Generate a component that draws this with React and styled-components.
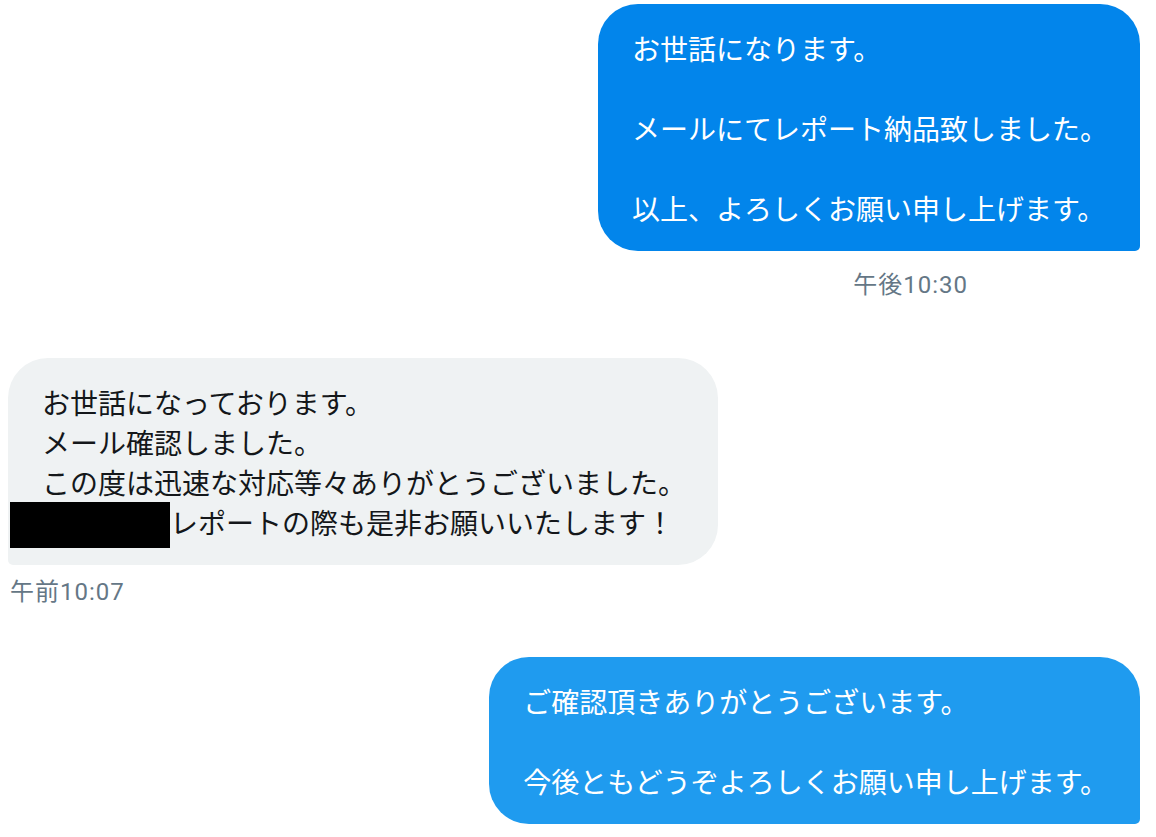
import styled, { createGlobalStyle } from "styled-components";

const GlobalStyle = createGlobalStyle`
    html, body {
        margin: 0;
        padding: 0;
        background: #fff;
    }
    body {
        font-family: "Noto Sans CJK JP", "Noto Sans", sans-serif;
    }
`;

const messages = [
    {
        id: 1,
        sent: true,
        tone: "dark",
        text: "お世話になります。\n\nメールにてレポート納品致しました。\n\n以上、よろしくお願い申し上げます。",
        time: "午後10:30",
    },
    {
        id: 2,
        sent: false,
        time: "午前10:07",
    },
    {
        id: 3,
        sent: true,
        tone: "light",
        text: "ご確認頂きありがとうございます。\n\n今後ともどうぞよろしくお願い申し上げます。",
    },
];

function App() {
    return (
        <>
            <GlobalStyle />
            <Thread>
                {messages.map((m) => (
                    <Group key={m.id} $sent={m.sent}>
                        {m.sent ? (
                            <Bubble $sent $tone={m.tone}>
                                {m.text}
                            </Bubble>
                        ) : (
                            <Bubble>
                                お世話になっております。
                                <br />
                                メール確認しました。
                                <br />
                                この度は迅速な対応等々ありがとうございました。
                                <br />
                                <Redacted />
                                レポートの際も是非お願いいたします！
                            </Bubble>
                        )}
                        {m.time && <Time $sent={m.sent}>{m.time}</Time>}
                    </Group>
                ))}
            </Thread>
        </>
    );
}

const Thread = styled.div`
    width: 1156px;
    box-sizing: border-box;
    padding: 4px 16px 0 8px;
    display: flex;
    flex-direction: column;
`;

const Group = styled.div`
    display: flex;
    flex-direction: column;
    align-items: ${(p) => (p.$sent ? "flex-end" : "flex-start")};
    margin-bottom: ${(p) => (p.$sent ? "58px" : "50px")};
`;

const bubbleColors = {
    dark: "#0285eb",
    light: "#1f9bef",
};

const Bubble = styled.div`
    box-sizing: border-box;
    padding: 24px 32px 23px 34px;
    font-size: 28px;
    line-height: 40px;
    font-weight: 400;
    white-space: pre-wrap;
    color: ${(p) => (p.$sent ? "#fff" : "#14171a")};
    background: ${(p) => (p.$sent ? bubbleColors[p.$tone] : "#eff2f3")};
    border-radius: ${(p) => (p.$sent ? "40px 40px 5px 40px" : "40px 40px 40px 5px")};
`;

const Redacted = styled.span`
    display: inline-block;
    vertical-align: top;
    width: 160px;
    height: 46px;
    margin: 0 0 -6px -32px;
    background: #000;
`;

const Time = styled.div`
    font-family: Roboto, "Noto Sans CJK JP", sans-serif;
    font-size: 24px;
    letter-spacing: 1px;
    line-height: 30px;
    color: #657786;
    margin-top: ${(p) => (p.$sent ? "19px" : "12px")};
    margin-right: ${(p) => (p.$sent ? "172px" : "0")};
    margin-left: ${(p) => (p.$sent ? "0" : "2px")};
`;

export default App;
